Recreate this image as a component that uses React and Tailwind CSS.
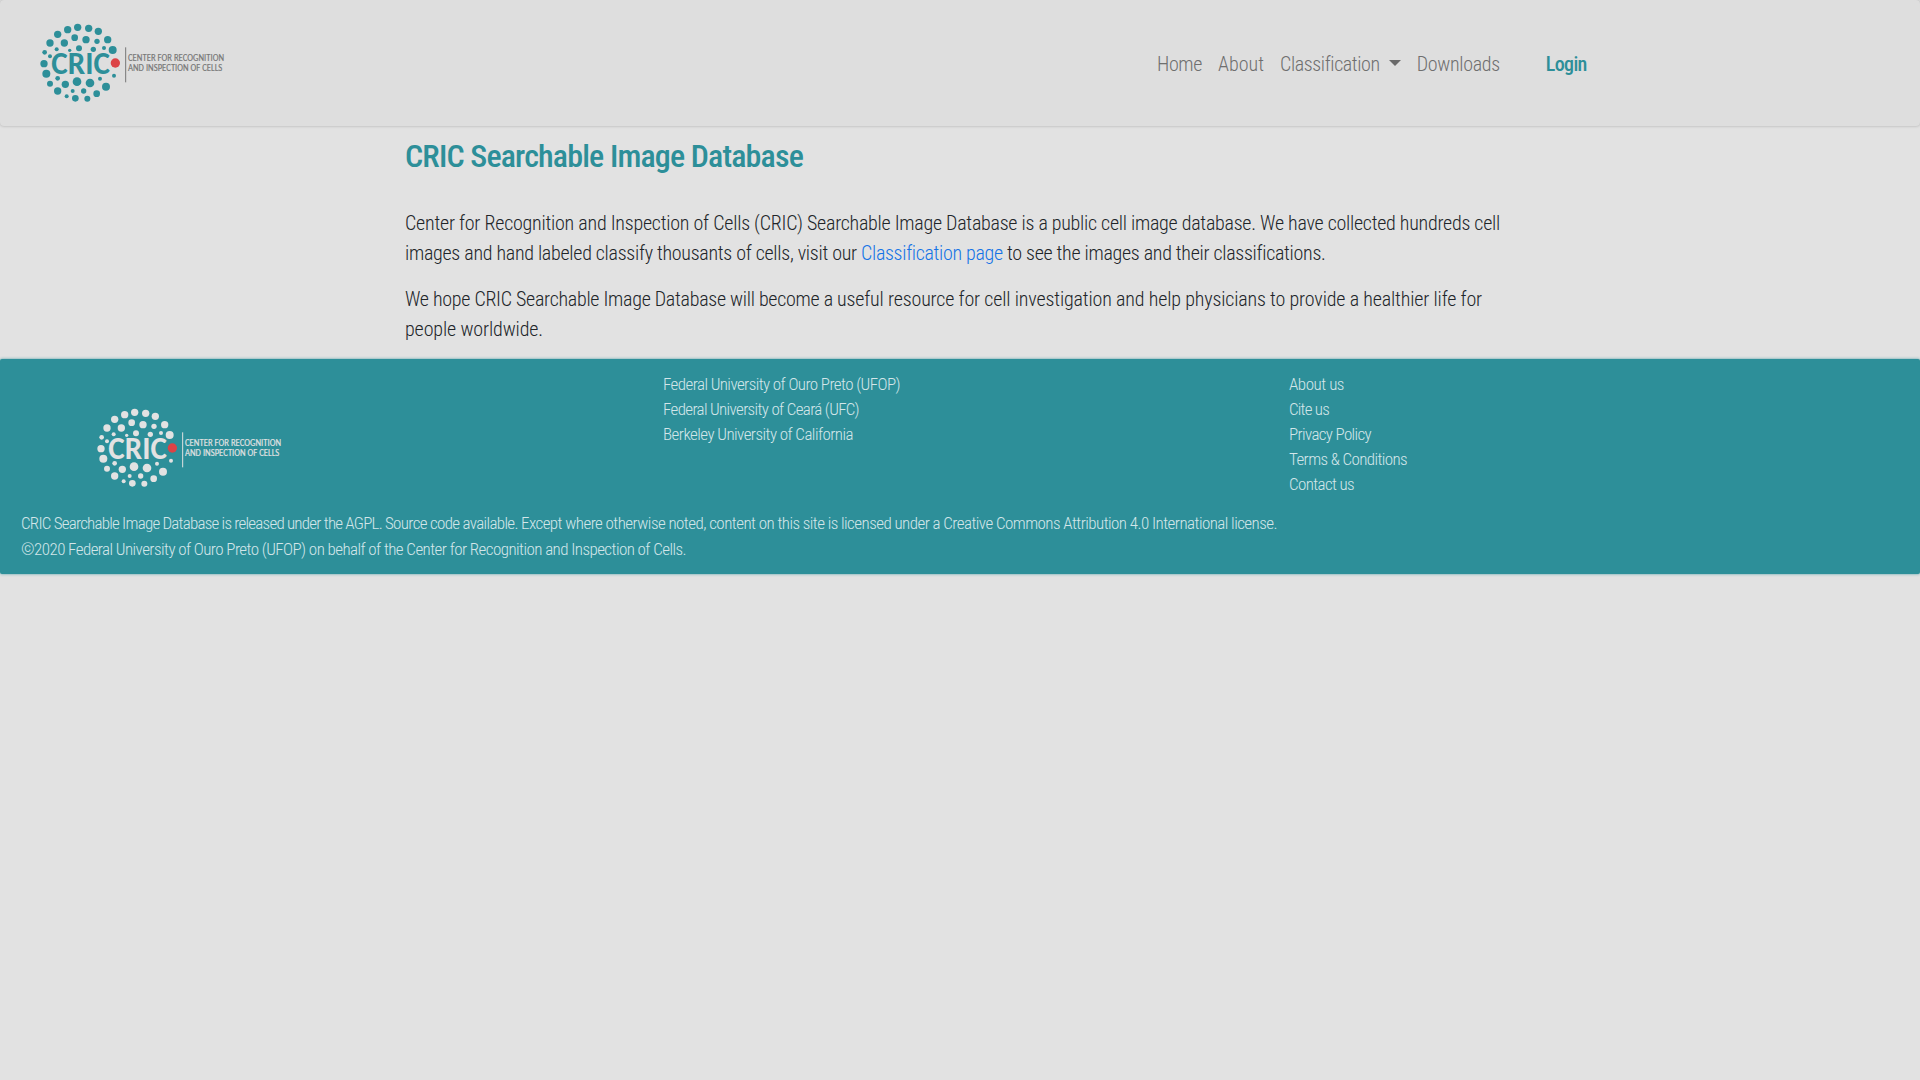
import { useLayoutEffect, useRef, useState } from 'react';

// Single line of text whose tracking is adjusted so that it fills `w` pixels.
function Line({ w, className = '', children }) {
  const ref = useRef(null);
  const [spacing, setSpacing] = useState(0);
  useLayoutEffect(() => {
    const natural = ref.current.getBoundingClientRect().width;
    setSpacing((w - natural) / String(children).length);
  }, [w, children]);
  return (
    <span ref={ref} className={`inline-block whitespace-pre ${className}`} style={{ letterSpacing: spacing }}>
      {children}
    </span>
  );
}

const DOTS = [
  [113, 47, 11], [143, 40, 11], [176, 43, 11], [205, 52, 11], [83, 61, 11], [134, 71, 10],
  [168, 77, 11], [201, 82, 8], [233, 77, 11], [60, 87, 11], [103, 87, 11], [248, 108, 12],
  [222, 102, 6], [190, 106, 8], [147, 103, 9], [119, 109, 5], [80, 106, 6], [44, 115, 7],
  [60, 127, 6], [42, 149, 11], [49, 179, 12], [83, 193, 7], [60, 209, 9], [106, 211, 11],
  [141, 203, 13], [180, 207, 13], [210, 194, 6], [252, 185, 6], [228, 218, 12], [200, 239, 10],
  [161, 231, 8], [128, 231, 6], [172, 254, 9], [136, 253, 10], [110, 247, 6], [83, 231, 11],
];

function Logo({ color, textColor, className = '' }) {
  return (
    <svg viewBox="0 0 600 300" className={`h-[100px] w-[200px] shrink-0 ${className}`}>
      <g fill={color}>
        {DOTS.map(([x, y, r]) => (
          <circle key={`${x}-${y}`} cx={x} cy={y} r={r} />
        ))}
        <text x="64" y="180" fontSize="98" fontWeight="700" fontFamily="Carlito, Lato, sans-serif" textLength="176" lengthAdjust="spacingAndGlyphs">
          CRIC
        </text>
      </g>
      <circle cx="256" cy="147" r="14" fill="#dc4346" />
      <rect x="285.5" y="100" width="3" height="105" fill={textColor} />
      <g fill={textColor} fontSize="28" fontWeight="400" fontFamily="Carlito, Lato, sans-serif" stroke={textColor} strokeWidth="0.5">
        <text x="294" y="142" textLength="288" lengthAdjust="spacingAndGlyphs">CENTER FOR RECOGNITION</text>
        <text x="294" y="172" textLength="283" lengthAdjust="spacingAndGlyphs">AND INSPECTION OF CELLS</text>
      </g>
    </svg>
  );
}

const PARTNERS = [
  ['Federal University of Ouro Preto (UFOP)', 237],
  ['Federal University of Ceará (UFC)', 196],
  ['Berkeley University of California', 190],
];

const LINKS = [
  ['About us', 55],
  ['Cite us', 40],
  ['Privacy Policy', 82],
  ['Terms & Conditions', 118],
  ['Contact us', 65],
];

export default function App() {
  return (
    <div className="min-h-screen bg-[#e2e2e2] font-['Roboto',sans-serif] font-light text-[#212529] [font-stretch:75%]">
      <header className="flex h-[126px] items-start rounded bg-[#dedede] pl-[30px] pt-[14px] shadow-[0_0_3px_rgba(0,0,0,0.25)]">
        <Logo color="#2d8f99" textColor="#777777" />
        <nav className="ml-[927px] mt-[35px] flex items-center text-xl leading-[30px] text-[#6f6f6f]">
          <a><Line w={45}>Home</Line></a>
          <a className="ml-4"><Line w={46}>About</Line></a>
          <a className="ml-4 flex items-center">
            <Line w={99}>Classification</Line>
            <span className="mb-0.5 ml-[9px] border-x-6 border-t-6 border-x-transparent border-t-[#6a6a6a]" />
          </a>
          <a className="ml-4"><Line w={83}>Downloads</Line></a>
          <a className="ml-[46px] font-medium text-[#2d8f99]"><Line w={41}>Login</Line></a>
        </nav>
      </header>

      <main className="h-[233px] pl-[405px] pt-[12px]">
        <h1 className="-mt-px h-[71px] text-[32px] font-medium leading-[38px] text-[#2d8f99]">
          <Line w={398}>CRIC Searchable Image Database</Line>
        </h1>
        <p className="flex flex-col items-start text-xl leading-[30px]">
          <span className="flex">
            <Line w={402}>{'Center for Recognition and Inspection of Cells (CRIC) '}</Line>
            <Line w={693}>{'Searchable Image Database is a public cell image database. We have collected hundreds cell'}</Line>
          </span>
          <span className="flex">
            <Line w={456}>{'images and hand labeled classify thousants of cells, visit our '}</Line>
            <a className="text-[#1473e6]"><Line w={141}>Classification page</Line></a>
            <Line w={322}>{' to see the images and their classifications.'}</Line>
          </span>
        </p>
        <p className="mt-4 flex flex-col items-start text-xl leading-[30px]">
          <span className="flex">
            <Line w={432}>{'We hope CRIC Searchable Image Database will become a '}</Line>
            <Line w={645}>{'useful resource for cell investigation and help physicians to provide a healthier life for'}</Line>
          </span>
          <Line w={138}>people worldwide.</Line>
        </p>
      </main>

      <footer className="h-[215px] rounded-xs bg-[#2d8f99] text-[17px] text-[#d3e6e9] shadow-[0_0_3px_rgba(45,143,153,0.8)]">
        <div className="flex h-[151px] items-start">
          <Logo color="#e2e2e2" textColor="#e2e2e2" className="ml-[87px] mt-[40px]" />
          <ul className="ml-[376px] mt-[13px] w-[626px] leading-[25px]">
            {PARTNERS.map(([label, w]) => (
              <li key={label} className="h-[25px]"><Line w={w}>{label}</Line></li>
            ))}
          </ul>
          <ul className="mt-[13px] leading-[25px]">
            {LINKS.map(([label, w]) => (
              <li key={label} className="h-[25px]"><Line w={w}>{label}</Line></li>
            ))}
          </ul>
        </div>
        <div className="flex flex-col items-start pl-[21px] leading-[26px]">
          <span className="flex">
            <Line w={364}>{'CRIC Searchable Image Database is released under the AGPL. '}</Line>
            <Line w={136}>{'Source code available. '}</Line>
            <Line w={756}>{'Except where otherwise noted, content on this site is licensed under a Creative Commons Attribution 4.0 International license.'}</Line>
          </span>
          <Line w={665}>
            {'©2020 Federal University of Ouro Preto (UFOP) on behalf of the Center for Recognition and Inspection of Cells.'}
          </Line>
        </div>
      </footer>
    </div>
  );
}
